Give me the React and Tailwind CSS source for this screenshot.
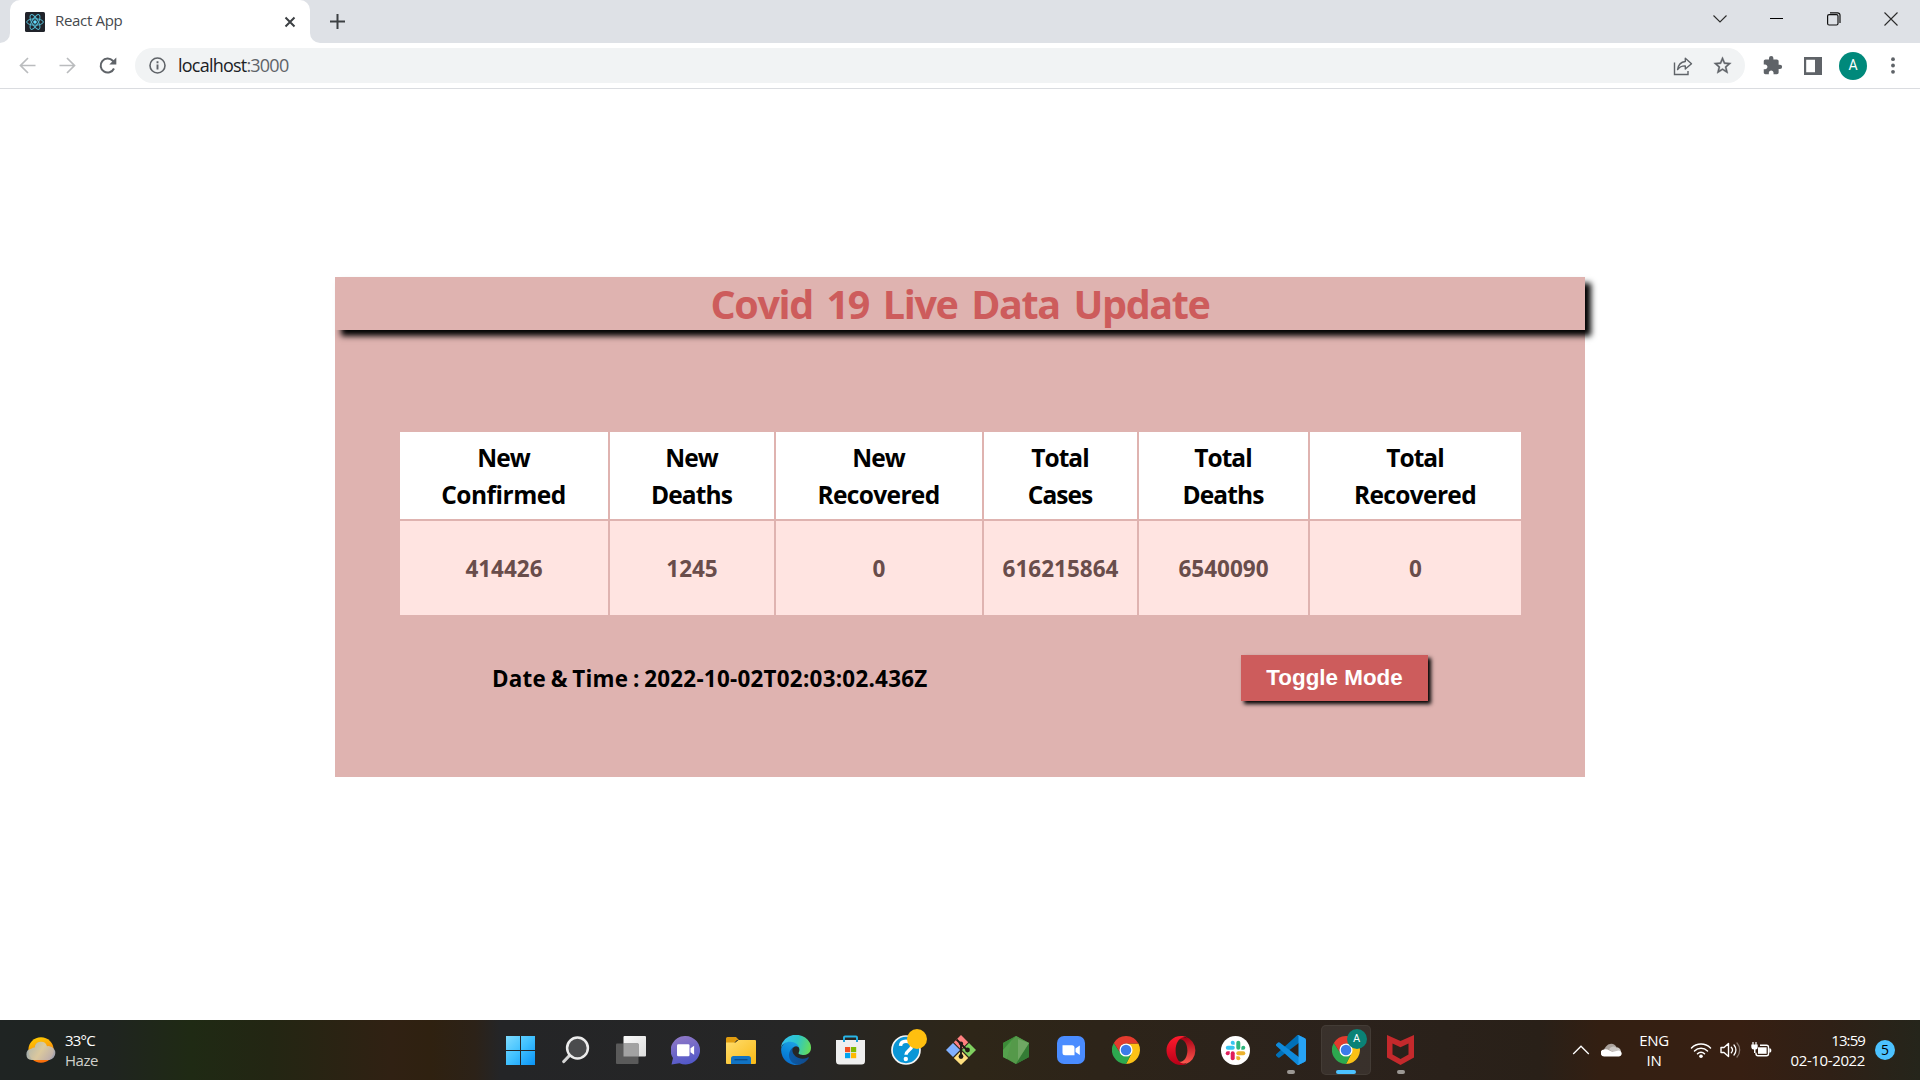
import React from "react";

/* ---------- Browser chrome ---------- */

function ReactFavicon() {
  return (
    <svg className="h-5 w-5" viewBox="0 0 20 20">
      <rect width="20" height="20" rx="1.5" fill="#20232a" />
      <g fill="none" stroke="#53b9d1" strokeWidth="1">
        <ellipse cx="10" cy="10" rx="8.3" ry="3.2" />
        <ellipse cx="10" cy="10" rx="8.3" ry="3.2" transform="rotate(60 10 10)" />
        <ellipse cx="10" cy="10" rx="8.3" ry="3.2" transform="rotate(120 10 10)" />
      </g>
      <circle cx="10" cy="10" r="1.8" fill="#61dafb" />
    </svg>
  );
}

function TabStrip() {
  return (
    <div className="flex h-[43px] bg-[#dee1e6]">
      <div className="flex w-[10px] bg-white">
        <div className="w-full rounded-br-[10px] bg-[#dee1e6]" />
      </div>
      <div className="flex w-[300px] bg-[#dee1e6]">
        <div className="flex w-full items-center rounded-t-[10px] bg-white pr-[14px] pl-[15px]">
          <ReactFavicon />
          <span className="ml-[10px] flex-1 pb-[3px] text-[15px] font-normal tracking-[-0.32px] text-[#45494d]">
            React App
          </span>
          <svg className="mt-[1px] h-3 w-3" viewBox="0 0 12 12">
            <path d="M1.5 1.5l9 9M10.5 1.5l-9 9" stroke="#3c4043" strokeWidth="2" />
          </svg>
        </div>
      </div>
      <div className="flex w-[10px] bg-white">
        <div className="w-full rounded-bl-[10px] bg-[#dee1e6]" />
      </div>
      <svg className="mt-[13px] ml-[9px] h-4 w-4" viewBox="0 0 16 16">
        <path d="M8.5 1v15M1 8.5h15" stroke="#3c4043" strokeWidth="2" />
      </svg>
      <div className="ml-auto flex h-[37px] items-center">
        <div className="flex w-[57px] justify-center">
          <svg className="h-[14px] w-[14px]" viewBox="0 0 14 14">
            <path d="M.5 3.500L7 10l6.500-6.500" fill="none" stroke="#2b2b2b" strokeWidth="1.100" />
          </svg>
        </div>
        <div className="flex w-[57px] justify-center">
          <div className="h-px w-[13px] bg-black" />
        </div>
        <div className="flex w-[57px] justify-center">
          <svg className="h-[14px] w-[14px]" viewBox="0 0 14 14">
            <rect x="0.6" y="2.600" width="10.400" height="10.400" rx="1.500" fill="none" stroke="#111" strokeWidth="1.200" />
            <path d="M3 .8h7.500a2.500 2.500 0 0 1 2.500 2.500V11" fill="none" stroke="#111" strokeWidth="1.200" />
          </svg>
        </div>
        <div className="flex w-[58px] justify-center">
          <svg className="h-[14px] w-[14px]" viewBox="0 0 14 14">
            <path d="M.5.5l13 13M13.500.5l-13 13" stroke="#2b2b2b" strokeWidth="1.100" />
          </svg>
        </div>
      </div>
    </div>
  );
}

function Toolbar() {
  return (
    <div className="flex h-[46px] items-center border-b border-[#dadce0] bg-white">
      <svg className="ml-[18px] h-5 w-5" viewBox="0 0 20 20">
        <path d="M17.500 9.500H2.500M10 2L2.500 9.500 10 17" fill="none" stroke="#babcbe" strokeWidth="1.700" />
      </svg>
      <svg className="ml-5 h-5 w-5" viewBox="0 0 20 20">
        <path d="M1.500 9.500h15M9 2l7.500 7.500L9 17" fill="none" stroke="#babcbe" strokeWidth="1.700" />
      </svg>
      <svg className="ml-5 h-5 w-5" viewBox="0 0 20 20">
        <path d="M16 12.500A7 7 0 1 1 14.800 4.800L16.500 6.500" fill="none" stroke="#5f6368" strokeWidth="2" />
        <path d="M18.300 1.500v7h-7z" fill="#5f6368" />
      </svg>
      <div className="ml-[17px] flex h-[35px] w-[1610px] items-center rounded-full bg-[#f1f3f4] pl-[14px]">
        <svg className="h-[17px] w-[17px]" viewBox="0 0 17 17">
          <circle cx="8.500" cy="8.500" r="7.500" fill="none" stroke="#5f6368" strokeWidth="1.600" />
          <path d="M8.500 7.500v5M8.500 4.300v2" stroke="#5f6368" strokeWidth="1.900" />
        </svg>
        <span className="ml-[12px] flex-1 text-[18px] leading-[35px] font-normal tracking-[-0.78px] text-[#5f6368]">
          <span className="text-[#202124]">localhost</span>:3000
        </span>
        <svg className="h-[20px] w-[20px]" viewBox="0 0 20 20">
          <path d="M1.500 6.500v12h13.500v-3.500" fill="none" stroke="#5f6368" strokeWidth="1.400" />
          <path
            d="M12.300 2.300L18.500 7.700l-6.200 5.300V9.900C8.700 9.800 6.500 10.900 4.600 13.600 5.200 9.200 7.600 6 12.300 5.500z"
            fill="none"
            stroke="#5f6368"
            strokeWidth="1.400"
            strokeLinejoin="round"
          />
        </svg>
        <svg className="mr-[12px] ml-[19px] h-[21px] w-[21px]" viewBox="0 0 24 24">
          <path
            d="M22 9.240l-7.190-.62L12 2 9.190 8.630 2 9.240l5.460 4.730L5.820 21 12 17.270 18.180 21l-1.630-7.030L22 9.240zM12 15.400l-3.760 2.270 1-4.280-3.320-2.880 4.380-.38L12 6.100l1.710 4.040 4.380.38-3.320 2.880 1 4.280L12 15.400z"
            fill="#5f6368"
            stroke="#5f6368"
            strokeWidth="0.400"
          />
        </svg>
      </div>
      <div className="ml-[7px] flex items-center">
        <div className="flex w-10 justify-center">
          <svg className="h-[21px] w-[21px]" viewBox="0 0 24 24">
            <path
              d="M20.500 11H19V7c0-1.100-.9-2-2-2h-4V3.500a2.500 2.500 0 0 0-5 0V5H4c-1.100 0-2 .9-2 2v3.800h1.500c1.500 0 2.700 1.200 2.700 2.700S5 16.200 3.500 16.200H2V20c0 1.100.9 2 2 2h3.800v-1.500c0-1.500 1.200-2.700 2.700-2.700s2.700 1.200 2.700 2.700V22H17c1.100 0 2-.9 2-2v-4h1.500a2.500 2.500 0 0 0 0-5z"
              fill="#5f6368"
            />
          </svg>
        </div>
        <div className="flex w-[41px] justify-center">
          <svg className="h-[18px] w-[18px]" viewBox="0 0 18 18">
            <path d="M0 0h18v18H0zM2.200 2.800v12.400h8.800V2.800z" fill="#5f6368" fillRule="evenodd" />
          </svg>
        </div>
        <div className="flex w-10 justify-center">
          <div className="flex h-7 w-7 items-center justify-center rounded-full bg-[#00897b] font-['Roboto'] text-[14px] text-white">
            A
          </div>
        </div>
        <div className="flex w-[39px] justify-center">
          <svg className="h-[17px] w-1" viewBox="0 0 4 17">
            <circle cx="2" cy="2.200" r="1.900" fill="#5f6368" />
            <circle cx="2" cy="8.500" r="1.900" fill="#5f6368" />
            <circle cx="2" cy="14.800" r="1.900" fill="#5f6368" />
          </svg>
        </div>
      </div>
    </div>
  );
}

/* ---------- Page content ---------- */

const columns = [
  { top: "New", bottom: "Confirmed", value: "414426", botCls: "tracking-[-0.5px]" },
  { top: "New", bottom: "Deaths", value: "1245", botCls: "tracking-[-0.9px]" },
  { top: "New", bottom: "Recovered", value: "0", botCls: "tracking-[-0.65px]" },
  { top: "Total", bottom: "Cases", value: "616215864", botCls: "tracking-[-0.95px]" },
  { top: "Total", bottom: "Deaths", value: "6540090", botCls: "tracking-[-0.9px]" },
  { top: "Total", bottom: "Recovered", value: "0", botCls: "tracking-[-0.65px]" },
];

function CovidCard() {
  return (
    <div className="h-[500px] w-[1250px] bg-[#dfb3b0]">
      <h1 className="h-[53px] bg-[#dfb3b0] pt-[1px] text-center text-[39.5px] leading-[53px] font-bold tracking-[-1.4px] text-[#cd5c5c] shadow-[6px_6px_6px_black] [word-spacing:5px]">
        Covid 19 Live Data Update
      </h1>
      <div className="mt-[102px] ml-[65px] grid w-[1121px] grid-cols-[208px_164px_206px_153px_169px_211px] grid-rows-[87px_94px] gap-[2px] text-center font-bold">
        {columns.map((c) => (
          <div key={c.top + c.bottom} className="bg-white pt-[7px] pr-[1px] text-[24.5px] leading-[37px] text-black">
            <div className="tracking-[-1px]">{c.top}</div>
            <div className={c.botCls}>{c.bottom}</div>
          </div>
        ))}
        {columns.map((c) => (
          <div
            key={c.top + c.bottom + "value"}
            className="flex items-center justify-center bg-[#ffe4e1] pt-[2px] text-[22.5px] text-[#694d4b]"
          >
            {c.value}
          </div>
        ))}
      </div>
      <div className="mt-[40px] flex h-[46px] items-center justify-between pr-[157px] pl-[157px]">
        <p className="pt-[2px] text-[22.4px] font-bold tracking-[0.26px] text-black [word-spacing:-1.5px]">
          Date &amp; Time : 2022-10-02T02:03:02.436Z
        </p>
        <button className="h-[46px] w-[187px] bg-[#cd5c5c] font-['Liberation_Sans'] text-[22.4px] font-bold text-white shadow-[3px_3px_4px_black]">
          Toggle Mode
        </button>
      </div>
    </div>
  );
}

/* ---------- Taskbar icons ---------- */

function StartIcon() {
  return (
    <svg className="h-[29px] w-[29px]" viewBox="0 0 29 29">
      <defs>
        <linearGradient id="start" x1="0" y1="0" x2="1" y2="1">
          <stop offset="0" stopColor="#7fdcff" />
          <stop offset="0.5" stopColor="#3fc0ff" />
          <stop offset="1" stopColor="#0a93f5" />
        </linearGradient>
      </defs>
      <path d="M0 0h14v14H0zM15 0h14v14H15zM0 15h14v14H0zM15 15h14v14H15z" fill="url(#start)" />
    </svg>
  );
}

function SearchIcon() {
  return (
    <svg className="h-[28px] w-[28px]" viewBox="0 0 28 28">
      <path d="M8.500 18.500L1.800 25.500" stroke="#d5d5d5" strokeWidth="3.200" strokeLinecap="round" />
      <circle cx="15.500" cy="12" r="10.400" fill="#4a4b4d" stroke="#ececec" strokeWidth="2.500" />
    </svg>
  );
}

function TaskViewIcon() {
  return (
    <svg className="h-[28px] w-[30px]" viewBox="0 0 30 28">
      <defs>
        <linearGradient id="tv" x1="0" y1="0" x2="1" y2="1">
          <stop offset="0" stopColor="#fafafa" />
          <stop offset="1" stopColor="#dcdcdc" />
        </linearGradient>
      </defs>
      <rect x="7.500" y="0" width="22.500" height="20.500" rx="1" fill="url(#tv)" />
      <rect x="0" y="7.500" width="22.500" height="20.500" rx="1" fill="#5a5a5a" />
      <rect x="7.500" y="7.500" width="15" height="13" fill="#a2a2a2" />
    </svg>
  );
}

function ChatIcon() {
  return (
    <svg className="h-[29px] w-[29px]" viewBox="0 0 29 29">
      <defs>
        <linearGradient id="chat" x1="0.300" y1="0" x2="0.600" y2="1">
          <stop offset="0" stopColor="#8f78c6" />
          <stop offset="1" stopColor="#5057c9" />
        </linearGradient>
      </defs>
      <path d="M14.500 0a14.500 14.300 0 1 1-6 27.300L.5 28.500 2 22A14.500 14.300 0 0 1 14.500 0z" fill="url(#chat)" />
      <rect x="6" y="8.200" width="12.500" height="12" rx="1.200" fill="#fff" />
      <path d="M19.500 12.300l3.600-2.500v9l-3.600-2.500z" fill="#fff" />
    </svg>
  );
}

function FolderIcon() {
  return (
    <svg className="h-[27px] w-[30px]" viewBox="0 0 30 27">
      <defs>
        <linearGradient id="folder" x1="0" y1="0" x2="1" y2="1">
          <stop offset="0" stopColor="#ffdd6e" />
          <stop offset="1" stopColor="#f9b915" />
        </linearGradient>
      </defs>
      <path d="M0 1.500A1.500 1.500 0 0 1 1.500 0H10l3 3h-2l-3 3H0z" fill="#e09c10" />
      <path d="M0 5.500h9.500L12.500 3H29a1 1 0 0 1 1 1v22a1 1 0 0 1-1 1H1a1 1 0 0 1-1-1z" fill="url(#folder)" />
      <path d="M5 27v-5.500a2.500 2.500 0 0 1 2.500-2.500h15a2.500 2.500 0 0 1 2.500 2.500V27z" fill="#1173c4" />
      <path d="M8.500 22.700h13" stroke="#0b4a8a" strokeWidth="1.300" />
    </svg>
  );
}

function EdgeIcon() {
  return (
    <svg className="h-[30px] w-[30px]" viewBox="0 0 256 256">
      <defs>
        <linearGradient id="e1" x1="0.100" y1="0.700" x2="1" y2="0.700">
          <stop offset="0" stopColor="#0c59a4" />
          <stop offset="1" stopColor="#114a8b" />
        </linearGradient>
        <linearGradient id="e2" x1="0.600" y1="0.100" x2="0.300" y2="0.900">
          <stop offset="0" stopColor="#1b9de2" />
          <stop offset="0.600" stopColor="#0883d9" />
          <stop offset="1" stopColor="#0b6fcc" />
        </linearGradient>
        <linearGradient id="e3" x1="0" y1="0.400" x2="1" y2="0.600">
          <stop offset="0" stopColor="#35c1f1" />
          <stop offset="0.500" stopColor="#2cc5cb" />
          <stop offset="1" stopColor="#66dd58" />
        </linearGradient>
      </defs>
      <path
        d="M231 190.500c-3.400 1.800-6.900 3.400-10.500 4.700a101 101 0 0 1-35.600 6.400c-47 0-87.800-32.300-87.800-73.800a31.300 31.300 0 0 1 16.300-27.200c-42.500 1.800-53.400 46-53.400 72 0 73.400 67.700 80.900 82.200 80.900 7.900 0 19.800-2.300 26.900-4.600l1.300-.4a128 128 0 0 0 66.600-52.800 4 4 0 0 0-6-5.200z"
        fill="url(#e1)"
      />
      <path
        d="M105.700 241.400a79 79 0 0 1-22.700-21.300 80.700 80.700 0 0 1 30.400-119.500c3.200-1.500 8.500-4.100 15.600-4a32.400 32.400 0 0 1 25.700 13 31.900 31.900 0 0 1 6.300 18.700c0-.2 24.500-79.600-80-79.600-43.900 0-80 41.700-80 78.200a130 130 0 0 0 12.100 56 128 128 0 0 0 156.400 67 75.500 75.500 0 0 1-63.800-8.500z"
        fill="url(#e2)"
      />
      <path
        d="M152.300 148.900c-.8 1-3.300 2.500-3.300 5.700 0 2.600 1.700 5.100 4.700 7.200 14.500 10 41.700 8.700 41.800 8.700a59.900 59.900 0 0 0 30.500-8.400A61.800 61.800 0 0 0 256 108.600C256.500 86.300 248 71.300 244.700 64.600 223 22.300 176.400-2 125.500-2A128 128 0 0 0-2.400 124.200c.5-36.500 36.700-66 80.100-66 3.500 0 23.500.3 42 10.100 16.300 8.500 24.900 18.800 30.800 29 6.100 10.700 7.200 24.100 7.200 29.500s-2.700 13.300-5.400 22.100z"
        fill="url(#e3)"
      />
    </svg>
  );
}

function StoreIcon() {
  return (
    <svg className="h-[30px] w-[29px]" viewBox="0 0 29 30">
      <path d="M8 8V2.500A1 1 0 0 1 9 1.500h11a1 1 0 0 1 1 1V6" fill="none" stroke="#29b6e8" strokeWidth="1.900" />
      <path d="M0 5h29v21a3.500 3.500 0 0 1-3.500 3.500h-22A3.500 3.500 0 0 1 0 26z" fill="#efefef" />
      <path d="M8 4v3M21 4v3" stroke="#1a9fd8" strokeWidth="1.900" />
      <path d="M9 12h5.200v5.200H9z" fill="#f25022" />
      <path d="M15 12h5.200v5.200H15z" fill="#7fba00" />
      <path d="M9 18h5.200v5.200H9z" fill="#00a4ef" />
      <path d="M15 18h5.200v5.200H15z" fill="#ffb900" />
    </svg>
  );
}

function HelpIcon() {
  return (
    <div className="relative h-[30px] w-[30px]">
      <svg className="h-[30px] w-[30px]" viewBox="0 0 30 30">
        <circle cx="15" cy="15" r="14" fill="#0a96d7" stroke="#f5f5f5" strokeWidth="1.700" />
        <path
          d="M9.500 10.800C9.700 7.800 12 6.300 15 6.300c3.300 0 5.800 1.800 5.800 4.700 0 4-5.800 4.500-5.800 8.700"
          fill="none"
          stroke="#fff"
          strokeWidth="3.400"
        />
        <circle cx="14.800" cy="24" r="2.200" fill="#fff" />
      </svg>
      <div className="absolute -top-[6px] left-4 h-5 w-5 rounded-full bg-[#ffbf0f]" />
    </div>
  );
}

function GitIcon() {
  return (
    <svg className="h-[30px] w-[30px]" viewBox="0 0 30 30">
      <path d="M15 0l7.200 7.200-7.200 7.200-7.200-7.200z" fill="#ff8080" />
      <path d="M7 8l7 7-7 7-7-7z" fill="#80b0ff" />
      <path d="M23 8l7 7-7 7-7-7z" fill="#80d060" />
      <path d="M15 15.800l7.200 7.100L15 30l-7.200-7.100z" fill="#ffe080" />
      <path d="M10.500 4.500L15 9v12M15 9l6.500 6.500" fill="none" stroke="#201a16" strokeWidth="1.900" />
      <circle cx="15" cy="8.500" r="2.100" fill="#201a16" />
      <circle cx="15" cy="21.500" r="2.400" fill="#201a16" />
      <circle cx="21.500" cy="15" r="2.400" fill="#201a16" />
    </svg>
  );
}

function NodeIcon() {
  return (
    <svg className="h-[28px] w-[26px]" viewBox="0 0 26 28">
      <path d="M13 0l13 7v14l-13 7-13-7V7z" fill="#418f3e" />
      <path d="M13 0l13 7-13 21L4 22.500 8 5z" fill="#55994a" />
      <path d="M13 0L0 7v7l6-8.500z" fill="#3c8b37" />
      <path d="M0 14L9 4l-5 19-4-2z" fill="#54a14c" />
      <path d="M26 7v14l-13 7z" fill="#347c35" />
      <path d="M15 3l11 4-11 17z" fill="#6fa763" />
    </svg>
  );
}

function ZoomIcon() {
  return (
    <svg className="h-[28px] w-[28px]" viewBox="0 0 28 28">
      <rect width="28" height="28" rx="7" fill="#4a8cff" />
      <path d="M5.500 9.200h9.500a2.500 2.500 0 0 1 2.500 2.500v7.600H8a2.500 2.500 0 0 1-2.500-2.500z" fill="#fff" />
      <path d="M18.500 12.500l4.300-3v9.600l-4.300-3z" fill="#fff" />
    </svg>
  );
}

function ChromeIcon() {
  return (
    <svg className="h-[28px] w-[28px]" viewBox="0 0 48 48">
      <path d="M24 13h21.300A24 24 0 0 1 24 48l9.500-18.500z" fill="#fbc116" />
      <path d="M3.200 12l11.300 17.500L24 35l9.500-5.500L24 48A24 24 0 0 1 3.200 12z" fill="#2da94f" />
      <path d="M3.200 12A24 24 0 0 1 45.300 13H24a11 11 0 0 0-10.500 15z" fill="#e33b2e" />
      <circle cx="24" cy="24" r="11.300" fill="#fff" />
      <circle cx="24" cy="24" r="9" fill="#3b7bea" />
    </svg>
  );
}

function OperaIcon() {
  return (
    <svg className="h-[29px] w-[30px]" viewBox="0 0 30 29">
      <defs>
        <linearGradient id="operaOuter" x1="0" y1="0" x2="0" y2="1">
          <stop offset="0" stopColor="#ff1b2d" />
          <stop offset="1" stopColor="#b80018" />
        </linearGradient>
        <linearGradient id="operaInner" x1="0" y1="0" x2="0" y2="1">
          <stop offset="0" stopColor="#a80014" />
          <stop offset="1" stopColor="#ff5a50" />
        </linearGradient>
      </defs>
      <path
        d="M10.500 4.800C12.300 2.600 14.500 1.300 17 1.300c5.400 0 9.800 5.900 9.800 13.200S22.400 27.700 17 27.700c-2.500 0-4.700-1.300-6.500-3.500 1.200 1 2.600 1.500 4 1.500 3.800 0 6.900-5 6.900-11.200S18.300 3.300 14.500 3.300c-1.400 0-2.800.5-4 1.500z"
        fill="url(#operaInner)"
      />
      <path d="M19 .6a14.500 14.500 0 0 1 0 27.800c3-2.300 3.500-8 3.500-13.900S22 2.900 19 .6z" fill="url(#operaInner)" />
      <path
        d="M15 0a14.500 14.500 0 1 0 0 29c2.300 0 4.500-.5 6.400-1.500-1.300.5-2.600.5-3.900.3C12.500 27 9.600 21.200 9.600 14.500S12.500 2 17.500 1.200c1.300-.2 2.600-.2 3.900.3C19.500.5 17.300 0 15 0z"
        fill="url(#operaOuter)"
      />
    </svg>
  );
}

function SlackIcon() {
  return (
    <svg className="h-[29px] w-[29px]" viewBox="0 0 29 29">
      <circle cx="14.500" cy="14.500" r="14.500" fill="#fff" />
      <g strokeWidth="4" strokeLinecap="round">
        <path d="M6.800 11.700h5" stroke="#36c5f0" />
        <path d="M17.300 6.700v5" stroke="#2eb67d" />
        <path d="M17.300 17.300h5" stroke="#ecb22e" />
        <path d="M11.700 17.300v5" stroke="#e01e5a" />
      </g>
      <path d="M11.700 4.700a2 2 0 0 1 2 2v2h-2a2 2 0 0 1 0-4z" fill="#36c5f0" />
      <path d="M24.300 11.700a2 2 0 0 1-2 2h-2v-2a2 2 0 0 1 4 0z" fill="#2eb67d" />
      <path d="M17.300 24.300a2 2 0 0 1-2-2v-2h2a2 2 0 0 1 0 4z" fill="#ecb22e" />
      <path d="M4.700 17.300a2 2 0 0 1 2-2h2v2a2 2 0 0 1-4 0z" fill="#e01e5a" />
    </svg>
  );
}

function VSCodeIcon() {
  return (
    <svg className="h-[30px] w-[30px]" viewBox="0 0 100 100">
      <path d="M96.500 10.800L75.900.9a6.200 6.200 0 0 0-7.100 1.200L1.300 63.600a4.200 4.200 0 0 0 0 6.200l5.500 5a4.200 4.200 0 0 0 5.300.2L93.400 13.400a4.100 4.100 0 0 1 6.600 3.300v-.3a6.300 6.300 0 0 0-3.500-5.600z" fill="#0070b8" />
      <path d="M96.500 89.200l-20.600 9.900a6.200 6.200 0 0 1-7.100-1.200L1.300 36.400a4.200 4.200 0 0 1 0-6.200l5.500-5a4.200 4.200 0 0 1 5.300-.2l81.300 61.600a4.100 4.100 0 0 0 6.600-3.300v.3a6.300 6.300 0 0 1-3.500 5.600z" fill="#0f8adb" />
      <path d="M75.900 99.100a6.200 6.200 0 0 1-7.100-1.200c2.300 2.300 6.200.7 6.200-2.600V4.700c0-3.300-3.900-4.900-6.200-2.600A6.200 6.200 0 0 1 75.900.9l20.600 9.900a6.300 6.300 0 0 1 3.500 5.600v67.200a6.300 6.300 0 0 1-3.500 5.600z" fill="#27a3f5" />
    </svg>
  );
}

function McAfeeIcon() {
  return (
    <svg className="h-[30px] w-[27px]" viewBox="0 0 27 30">
      <path d="M0 0l13.500 6L27 0v22.500L13.500 30 0 22.500zM5.500 8.500v11l8 4.500 8-4.500v-11l-8 3.800z" fill="#c4292c" fillRule="evenodd" />
    </svg>
  );
}

const apps = [
  { name: "start", Icon: StartIcon },
  { name: "search", Icon: SearchIcon },
  { name: "task-view", Icon: TaskViewIcon },
  { name: "chat", Icon: ChatIcon },
  { name: "explorer", Icon: FolderIcon },
  { name: "edge", Icon: EdgeIcon },
  { name: "store", Icon: StoreIcon },
  { name: "help", Icon: HelpIcon },
  { name: "git", Icon: GitIcon },
  { name: "node", Icon: NodeIcon },
  { name: "zoom", Icon: ZoomIcon },
  { name: "chrome", Icon: ChromeIcon },
  { name: "opera", Icon: OperaIcon },
  { name: "slack", Icon: SlackIcon },
  { name: "vscode", Icon: VSCodeIcon, running: true },
  { name: "chrome-active", Icon: ChromeIcon, active: true },
  { name: "mcafee", Icon: McAfeeIcon, running: true },
];

function TaskbarApp({ Icon, running, active }) {
  return (
    <div className="flex w-[55px] items-center justify-center">
      <div
        className={
          active
            ? "relative flex h-[50px] w-[50px] items-center justify-center rounded-[5px] border border-white/5 bg-white/7"
            : "relative flex h-[50px] w-[50px] items-center justify-center"
        }
      >
        <Icon />
        {active && (
          <div className="absolute top-[3px] left-[25px] flex h-5 w-5 items-center justify-center rounded-full bg-[#0a8276] font-['Roboto'] text-[11px] text-white">
            A
          </div>
        )}
        {active && <div className="absolute bottom-0 left-[14px] h-1 w-5 rounded-full bg-[#4cc2ff]" />}
        {running && <div className="absolute bottom-[1px] left-[21px] h-1 w-2 rounded-full bg-[#9c9894]" />}
      </div>
    </div>
  );
}

function Weather() {
  return (
    <div className="flex w-[493px] items-center pl-[26px]">
      <svg className="mb-[1px] h-[28px] w-[30px]" viewBox="0 0 30 28">
        <defs>
          <linearGradient id="sun" x1="0" y1="0" x2="0.300" y2="1">
            <stop offset="0" stopColor="#ffd400" />
            <stop offset="1" stopColor="#f9700d" />
          </linearGradient>
          <linearGradient id="haze" x1="0" y1="0.300" x2="1" y2="0.700">
            <stop offset="0" stopColor="#a9b7bd" />
            <stop offset="0.500" stopColor="#d8cfae" />
            <stop offset="1" stopColor="#b3b1bd" />
          </linearGradient>
        </defs>
        <circle cx="15" cy="14" r="12.700" fill="url(#sun)" />
        <path
          d="M5.500 24a5.700 5.700 0 0 1-.3-11.300A6 6 0 0 1 8.700 11.500a6.300 6.300 0 0 1 12.300-1.300 6 6 0 0 1 2.500 0A7 7 0 0 1 23.500 24z"
          fill="url(#haze)"
          fillOpacity="0.900"
        />
      </svg>
      <div className="ml-[9px] text-[15px] leading-[20px]">
        <div className="tracking-[-0.8px] text-white">33°C</div>
        <div className="tracking-[-0.48px] text-[#d0d0cc]">Haze</div>
      </div>
    </div>
  );
}

function Tray() {
  return (
    <div className="ml-auto flex items-center text-[15px] leading-[20px] text-white">
      <svg className="h-[18px] w-[18px]" viewBox="0 0 18 18">
        <path d="M1.200 13L9 5.200l7.800 7.800" fill="none" stroke="#fff" strokeWidth="1.300" />
      </svg>
      <svg className="ml-[11px] h-[14px] w-[21px]" viewBox="0 0 21 14">
        <path d="M3.500 8A4.500 4.500 0 0 1 5 3.500 6 6 0 0 1 15.500 4l-5 6z" fill="#a9a19b" />
        <path d="M15 4.200a5 5 0 0 1 5 4.500l-6 2-6-4.500a5 5 0 0 1 7-2z" fill="#c9c5c2" />
        <path d="M3.500 13.500a3.500 3.500 0 0 1-.5-7c2-.6 3.500-.2 5 .7L11.500 9l5-1.200a3 3 0 1 1 .6 5.700z" fill="#fff" />
      </svg>
      <div className="ml-[17px] w-[30px] text-center">
        <div className="tracking-[-0.3px]">ENG</div>
        <div className="tracking-[-0.3px]">IN</div>
      </div>
      <svg className="ml-[21px] h-[18px] w-[22px]" viewBox="0 0 22 18">
        <g fill="none" stroke="#fff" strokeWidth="1.500" strokeLinecap="round">
          <path d="M1.500 7a13.500 13.500 0 0 1 19 0" />
          <path d="M4.500 10a9.200 9.200 0 0 1 13 0" />
          <path d="M7.500 12.800a5 5 0 0 1 7 0" />
        </g>
        <circle cx="11" cy="15.300" r="1.800" fill="#fff" />
      </svg>
      <svg className="ml-[8px] h-[18px] w-[21px]" viewBox="0 0 21 18">
        <path d="M1 6.500h3L8.500 2.500v13L4 11.500H1z" fill="none" stroke="#fff" strokeWidth="1.400" strokeLinejoin="round" />
        <path d="M11.300 6.300a4 4 0 0 1 0 5.400M14 4a7.500 7.500 0 0 1 0 10" fill="none" stroke="#fff" strokeWidth="1.300" strokeLinecap="round" />
        <path d="M17 2a10.500 10.500 0 0 1 0 14" fill="none" stroke="#83736a" strokeWidth="1.300" strokeLinecap="round" />
      </svg>
      <svg className="ml-[10px] h-[18px] w-[21px]" viewBox="0 0 21 18">
        <path d="M9 4.200h6.500a2 2 0 0 1 2 2v6.600a2 2 0 0 1-2 2H7a2 2 0 0 1-2-2v-1" fill="none" stroke="#fff" strokeWidth="1.400" />
        <rect x="7" y="6.300" width="8.600" height="6.500" fill="#fff" />
        <path d="M18.300 7.300c1.500 0 2 .8 2 2.200s-.5 2.200-2 2.200z" fill="#fff" />
        <path d="M.3 3.500h6.400v2.800A2.200 2.200 0 0 1 4.500 8.500v3.500H3V8.500A2.500 2.500 0 0 1 .3 6.300z" fill="#fff" />
        <path d="M2 1v3M5 1v3" stroke="#fff" strokeWidth="1.200" />
      </svg>
      <div className="ml-[18px] flex w-[75px] flex-col items-end whitespace-nowrap">
        <div className="tracking-[-0.9px]">13:59</div>
        <div className="tracking-[-0.38px]">02-10-2022</div>
      </div>
      <div className="mr-[25px] ml-[10px] flex h-5 w-5 items-center justify-center rounded-full bg-[#4cc2ff] text-[14px] text-black">
        5
      </div>
    </div>
  );
}

function Taskbar() {
  return (
    <div className="flex h-[60px] bg-[linear-gradient(90deg,#1f2423_0px,#1f2420_110px,#1f2a14_190px,#232613_270px,#302113_390px,#2f2110_430px,#2c2218_475px,#242527_500px,#262626_800px,#2e2618_970px,#2d2419_1100px,#2b221c_1350px,#292018_1540px,#331f12_1600px,#371f12_1740px,#2f2016_1830px,#25251b_1920px)]">
      <Weather />
      <div className="flex">
        {apps.map((app) => (
          <TaskbarApp key={app.name} {...app} />
        ))}
      </div>
      <Tray />
    </div>
  );
}

export default function App() {
  return (
    <div className="flex h-[1080px] w-[1920px] flex-col overflow-hidden bg-white font-['Open_Sans',sans-serif]">
      <TabStrip />
      <Toolbar />
      <main className="flex flex-1 justify-center pt-[188px]">
        <CovidCard />
      </main>
      <Taskbar />
    </div>
  );
}
